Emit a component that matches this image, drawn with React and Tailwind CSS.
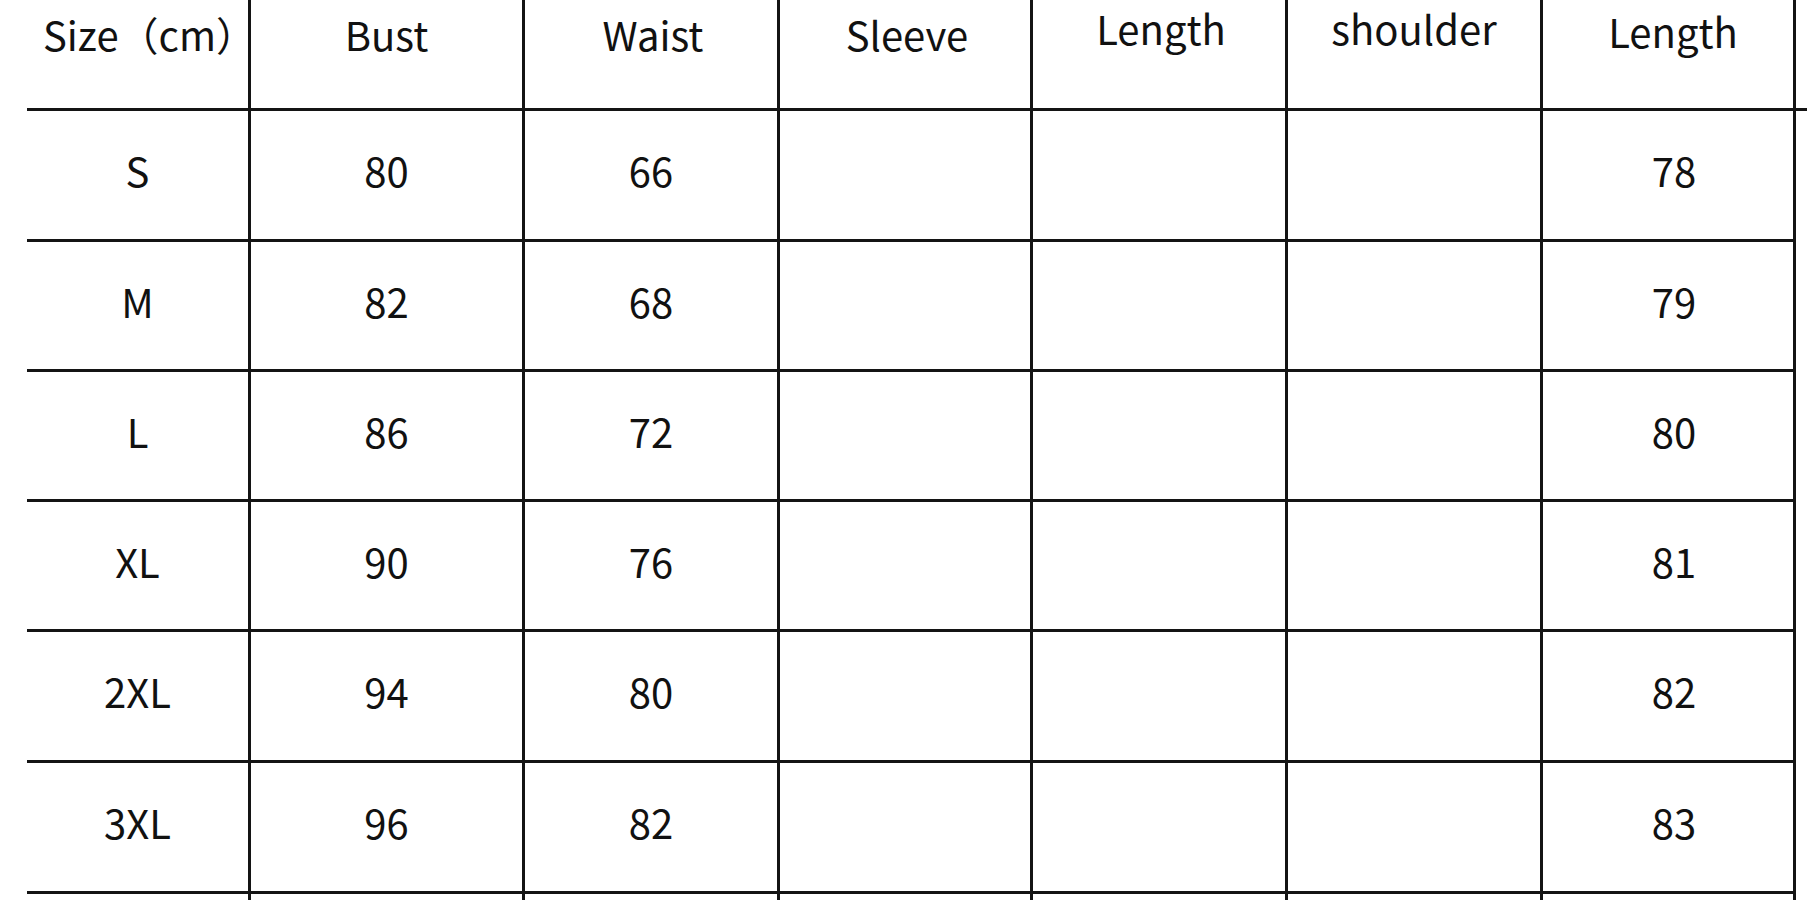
const COLS = [
  { w: 'w-[224px]', head: 'Size（cm）', pt: 'pt-[10px]', hpl: 'pl-[16px]', dpl: '' },
  { w: 'w-[274px]', head: 'Bust', pt: 'pt-[10px]', hpl: '', dpl: '' },
  { w: 'w-[255px]', head: 'Waist', pt: 'pt-[10px]', hpl: 'pl-[4px]', dpl: '' },
  { w: 'w-[253px]', head: 'Sleeve', pt: 'pt-[10px]', hpl: 'pl-[4px]', dpl: '' },
  { w: 'w-[255px]', head: 'Length', pt: 'pt-[4px]', hpl: 'pl-[4px]', dpl: '' },
  { w: 'w-[255px]', head: 'shoulder', pt: 'pt-[4px]', hpl: '', dpl: '' },
  { w: 'w-[253px]', head: 'Length', pt: 'pt-[7px]', hpl: 'pl-[10px]', dpl: 'pl-[12px]' },
];

const ROWS = [
  { h: 'h-[131px]', cells: ['S', '80', '66', '', '', '', '78'] },
  { h: 'h-[130px]', cells: ['M', '82', '68', '', '', '', '79'] },
  { h: 'h-[130px]', cells: ['L', '86', '72', '', '', '', '80'] },
  { h: 'h-[130px]', cells: ['XL', '90', '76', '', '', '', '81'] },
  { h: 'h-[131px]', cells: ['2XL', '94', '80', '', '', '', '82'] },
  { h: 'h-[131px]', cells: ['3XL', '96', '82', '', '', '', '83'] },
];

export default function App() {
  return (
    <div
      className="w-[1807px] h-[900px] bg-white overflow-hidden text-[#111] text-[40px] leading-[48px]"
      style={{ fontFamily: '"Noto Sans CJK SC", "Noto Sans", sans-serif' }}
    >
      {/* header row: bottom rule runs on to the page edge */}
      <div className="flex h-[111px] ml-[27px] border-b-[3px] border-[#141414]">
        {COLS.map((col, i) => (
          <div
            key={i}
            className={`${col.w} shrink-0 flex justify-center items-start ${col.pt} ${col.hpl} border-r-[3px] border-[#141414]`}
          >
            {col.head}
          </div>
        ))}
      </div>

      {ROWS.map((row, r) => (
        <div key={r} className={`flex ${row.h} ml-[27px] w-[1769px] border-b-[3px] border-[#141414]`}>
          {COLS.map((col, i) => (
            <div
              key={i}
              className={`${col.w} shrink-0 flex items-center justify-center pb-[10px] ${col.dpl} border-r-[3px] border-[#141414]`}
            >
              {row.cells[i]}
            </div>
          ))}
        </div>
      ))}

      <div className="flex h-[20px] ml-[27px]">
        {COLS.map((col, i) => (
          <div key={i} className={`${col.w} shrink-0 border-r-[3px] border-[#141414]`} />
        ))}
      </div>
    </div>
  );
}
